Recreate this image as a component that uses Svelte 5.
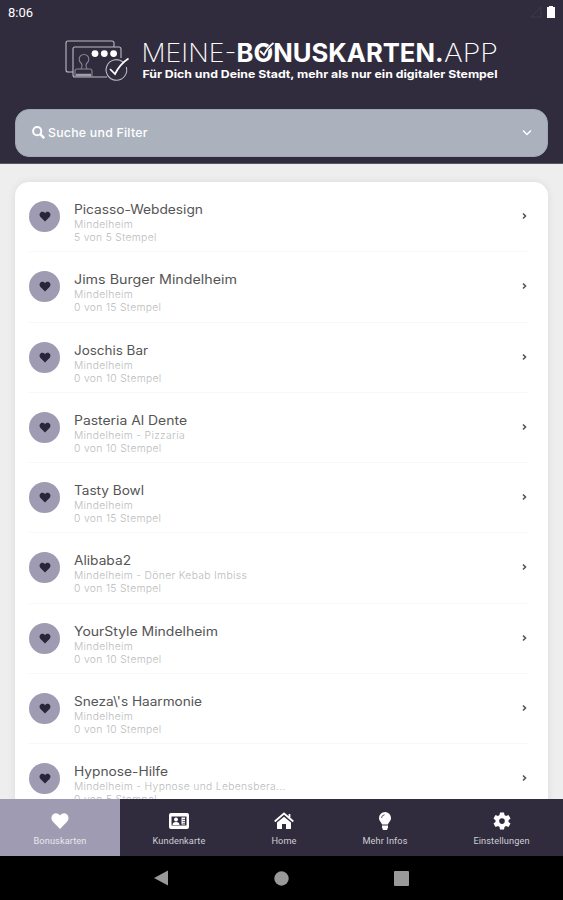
<script lang="ts">
  const cards = [
    { name: 'Picasso-Webdesign', place: 'Mindelheim', stamps: '5 von 5 Stempel', width: 129 },
    { name: 'Jims Burger Mindelheim', place: 'Mindelheim', stamps: '0 von 15 Stempel', width: 163 },
    { name: 'Joschis Bar', place: 'Mindelheim', stamps: '0 von 10 Stempel', width: 74 },
    { name: 'Pasteria Al Dente', place: 'Mindelheim - Pizzaria', stamps: '0 von 10 Stempel', width: 113 },
    { name: 'Tasty Bowl', place: 'Mindelheim', stamps: '0 von 15 Stempel', width: 70 },
    { name: 'Alibaba2', place: 'Mindelheim - Döner Kebab Imbiss', stamps: '0 von 15 Stempel', width: 57 },
    { name: 'YourStyle Mindelheim', place: 'Mindelheim', stamps: '0 von 10 Stempel', width: 144 },
    { name: "Sneza\\'s Haarmonie", place: 'Mindelheim', stamps: '0 von 10 Stempel', width: 128 },
    { name: 'Hypnose-Hilfe', place: 'Mindelheim - Hypnose und Lebensbera...', stamps: '0 von 5 Stempel', width: 94 }
  ];

  const tabs = [
    { label: 'Bonuskarten', icon: 'heart' },
    { label: 'Kundenkarte', icon: 'card' },
    { label: 'Home', icon: 'home' },
    { label: 'Mehr Infos', icon: 'bulb' },
    { label: 'Einstellungen', icon: 'gear' }
  ];

  const heart = 'M10 18 2.2 10.2C-.3 7.4.1 3.6 2.8 2c2.4-1.4 5.2-.7 7.2 1.7C12 1.3 14.8.6 17.2 2c2.7 1.6 3.1 5.4.6 8.2Z';
</script>

<div class="screen">
  <header>
    <div class="status">
      <span>8:06</span>
      <svg width="27" height="14" viewBox="0 0 27 14">
        <path d="M2 12 12 2v10Z" fill="none" stroke="#3d394a" />
        <path d="M18 2h2V1h4v1h2v11h-8Z" fill="#fff" />
      </svg>
    </div>

    <svg class="logo" width="434" height="46" viewBox="65 38 434 46">
      <g fill="none" stroke="#bdbbc4" stroke-width="1.1">
        <path d="M73 72h-5q-2 0-2-2V43q0-2 2-2h44q2 0 2 2v4" />
        <path d="M107 77H75q-2 0-2-2V49q0-2 2-2h44q2 0 2 2v9" />
        <path d="M81 69q2-4 0-6a4.800 4.800 0 1 1 6 0q-2 2 0 6" stroke="#898592" />
        <path d="M75 76v-5q0-2 2-2h13q2 0 2 2v5Z" stroke="#898592" />
        <path d="M76 75h15" stroke="#a19eaa" stroke-width="2.500" />
        <path d="M123 62a10.300 10.300 0 1 0 3.300 5" />
      </g>
      <g fill="#fff">
        <circle cx="95" cy="53.6" r="3.4" />
        <circle cx="104.300" cy="53.6" r="3.4" />
        <circle cx="113.600" cy="53.6" r="3.4" />
      </g>
      <path d="m110 69 5 5q5-10 13.500-15.500" fill="none" stroke="#fff" stroke-width="1.7" />
      <g class="wordmark">
        <text x="141.500" y="61.500" textLength="95" lengthAdjust="spacingAndGlyphs" class="thin">MEINE-</text>
        <text x="236.500" y="61.500" textLength="207" lengthAdjust="spacingAndGlyphs" class="bold">BONUSKARTEN.</text>
        <text x="444" y="61.500" textLength="54" lengthAdjust="spacingAndGlyphs" class="thin">APP</text>
      </g>
      <path d="m260 51 4 4q3-7 9-11" fill="none" stroke="#302c3d" stroke-width="3.200" />
      <path d="m260 51 4 4q3-7 9.500-12" fill="none" stroke="#fff" stroke-width="1.800" />
      <text x="142.500" y="78" textLength="355" lengthAdjust="spacingAndGlyphs" class="claim">Für Dich und Deine Stadt, mehr als nur ein digitaler Stempel</text>
    </svg>

    <div class="search">
      <svg width="13" height="13" viewBox="0 0 13 13" fill="none" stroke="#fff" stroke-width="2">
        <circle cx="5.200" cy="5.200" r="4.100" />
        <path d="m8.200 8.200 4 4" stroke-width="2.500" />
      </svg>
      <span>Suche und Filter</span>
      <svg class="chevron" width="10" height="7" viewBox="0 0 10 7" fill="none" stroke="#fff" stroke-width="1.500">
        <path d="m1 1.500 4 4 4-4" />
      </svg>
    </div>
  </header>

  <main>
    <div class="list">
      {#each cards as card}
        <div class="row">
          <div class="badge">
            <svg width="12" height="11" viewBox="0 0 20 19"><path d={heart} fill="#29263a" /></svg>
          </div>
          <div class="details">
            <svg class="name" width={card.width} height="18">
              <text x="0" y="14" textLength={card.width} lengthAdjust="spacingAndGlyphs">{card.name}</text>
            </svg>
            <div class="sub">{card.place}</div>
            <div class="sub">{card.stamps}</div>
          </div>
          <svg class="arrow" width="5" height="8" viewBox="0 0 5 8" fill="none" stroke="#555" stroke-width="1.600">
            <path d="m1 1.500 2.500 2.500L1 6.500" />
          </svg>
        </div>
      {/each}
    </div>
  </main>

  <nav>
    {#each tabs as tab, i}
      <div class="tab" class:active={i === 0}>
        <svg width="20" height="18" viewBox="0 0 20 18" fill="#fff">
          {#if tab.icon === 'heart'}
            <path d={heart} transform="translate(1 0) scale(.9 .95)" />
          {:else if tab.icon === 'card'}
            <rect y="1" width="20" height="16" rx="2" />
            <path d="M2.500 4.500h15v9h-15Z" fill="#302c3d" />
            <circle cx="7" cy="7.500" r="2" />
            <path d="M3.500 13q0-3 3.500-3t3.500 3ZM12.500 5.500H16v7h-3.500Z" />
            <path d="M13.500 7.500H16M13.500 9.500H16M13.500 11.300H16" stroke="#302c3d" stroke-width=".7" />
          {:else if tab.icon === 'home'}
            <path d="M10 4.800 17 10.500V17h-5v-5H8v5H3v-6.500Z" />
            <path d="m.7 9.500 9.300-8 9.300 8M15.500 2v4" fill="none" stroke="#fff" stroke-width="1.800" />
          {:else if tab.icon === 'bulb'}
            <path d="M7 12.500C6.500 10 4 9.200 4 6a6 6 0 0 1 12 0c0 3.200-2.500 4-3 6.500ZM7 13.500h6v2L12 18H8l-1-2.500Z" />
            <path d="M6.500 6Q6.700 3.200 9.500 2.800" fill="none" stroke="#302c3d" stroke-width=".8" />
          {:else}
            <path
              fill-rule="evenodd"
              d="M8 .5h4l.5 2.600 1.500.9 2.500-.9 2 3.400-2 1.700v1.700l2 1.700-2 3.400-2.500-.9-1.500.9-.5 2.600H8l-.5-2.600-1.500-.9-2.500.9-2-3.400 2-1.700V8.200l-2-1.700 2-3.400L6 4l1.500-.9ZM10 6.300a2.800 2.800 0 1 0 0 5.600 2.800 2.800 0 0 0 0-5.600Z"
            />
          {/if}
        </svg>
        <span>{tab.label}</span>
      </div>
    {/each}
  </nav>

  <footer>
    <svg width="15" height="16" viewBox="0 0 15 16"><path d="M0 8 14 .5v15Z" fill="#999" /></svg>
    <svg width="15" height="15" viewBox="0 0 15 15"><circle cx="7.500" cy="7.500" r="7.200" fill="#999" /></svg>
    <svg width="15" height="15" viewBox="0 0 15 15"><rect width="15" height="15" rx="1" fill="#999" /></svg>
  </footer>
</div>

<style>
  :global(body) {
    background: #000;
  }

  .screen {
    display: flex;
    flex-direction: column;
    width: 563px;
    height: 900px;
    overflow: hidden;
    font-family: Inter, 'Open Sans', sans-serif;
  }

  svg {
    display: block;
    flex: none;
  }

  header {
    box-sizing: border-box;
    flex: none;
    height: 164px;
    background: #302c3d;
    border-bottom: 1px solid #5b5864;
  }

  .status {
    box-sizing: border-box;
    display: flex;
    justify-content: space-between;
    height: 38px;
    padding: 5px 7px 0 8px;
    color: #fff;
    font: 13px/16px Roboto, sans-serif;
  }

  .logo {
    margin-left: 65px;
  }

  .wordmark {
    fill: #fff;
    font-size: 25.5px;
  }

  .thin {
    font-weight: 200;
  }

  .bold {
    font-weight: 700;
  }

  .claim {
    fill: #fff;
    font-size: 11px;
    font-weight: 700;
  }

  .search {
    box-sizing: border-box;
    display: flex;
    align-items: center;
    gap: 3px;
    height: 48px;
    margin: 25px 15px 0;
    padding: 0 15px 1px 16px;
    border: 1px solid #a0a6b5;
    border-radius: 14px;
    background: #abb2be;
    color: #fff;
    font-size: 12.3px;
    font-weight: 500;
    letter-spacing: 0.25px;
  }

  .chevron {
    margin-left: auto;
  }

  main {
    box-sizing: border-box;
    flex: none;
    height: 635px;
    padding: 18px 15px 0;
    overflow: hidden;
    background: #eee;
  }

  .list {
    height: 640px;
    padding: 0 0 0 14px;
    border-radius: 14px 14px 0 0;
    background: #fff;
    box-shadow: 0 0 8px rgba(0, 0, 0, 0.08);
  }

  .row {
    box-sizing: border-box;
    display: flex;
    align-items: flex-start;
    height: 70.3px;
    margin-right: 21px;
    padding-top: 18px;
    border-bottom: 1px solid #f7f7f7;
  }

  .badge {
    display: grid;
    place-items: center;
    width: 31px;
    height: 31px;
    margin: 1px 14px 0 0;
    border-radius: 50%;
    background: #9f9bb2;
  }

  .name {
    overflow: visible;
    fill: #555;
    font-size: 12.8px;
  }

  .sub {
    color: #b9bbbd;
    font-size: 10.3px;
    font-weight: 300;
    line-height: 13px;
    letter-spacing: 0.34px;
  }

  .arrow {
    margin: 12px 0 0 auto;
  }

  nav {
    display: grid;
    flex: none;
    grid-template-columns: 120px 118px 92px 110px 123px;
    height: 57px;
    background: #302c3d;
  }

  .tab {
    display: flex;
    flex-direction: column;
    align-items: center;
    gap: 6px;
    padding-top: 13px;
    color: #cfcdd7;
    font: 9.2px/10px Roboto, sans-serif;
    letter-spacing: 0.1px;
  }

  .active {
    background: #9f9bb2;
    color: #e8e7ee;
  }

  footer {
    display: flex;
    align-items: center;
    justify-content: center;
    gap: 105px;
    height: 44px;
    background: #000;
  }
</style>
